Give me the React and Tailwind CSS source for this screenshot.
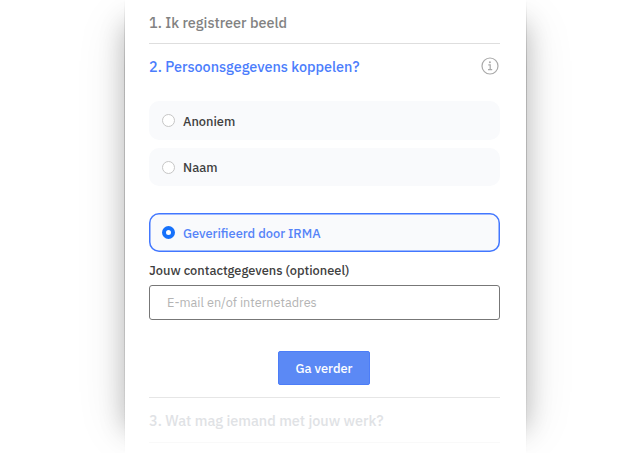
import React from "react";

function Heading({ children, className }) {
  return (
    <h2 className={`whitespace-nowrap text-[14.4px] leading-[20px] font-medium ${className}`}>
      {children}
    </h2>
  );
}

function Option({ label, checked, className }) {
  return (
    <label
      className={`flex shrink-0 items-center rounded-[10px] bg-[#f9fafc] pl-[13px] ${
        checked ? "text-[#5583f8] inset-ring-[1.5px] inset-ring-[#4277ff]" : "text-[#404040]"
      } ${className}`}
    >
      <span
        className={`mr-[8px] size-[13px] shrink-0 rounded-full bg-white ${
          checked ? "border-4 border-[#1671fb]" : "border border-[#c6c6c6]"
        }`}
      />
      <span className="mt-[2px] whitespace-nowrap text-[12.8px] leading-[18px] font-medium">{label}</span>
    </label>
  );
}

function InfoIcon() {
  return (
    <svg className="-mt-[2px]" width="18" height="18" viewBox="0 0 18 18" fill="none" stroke="#a9a9a9">
      <circle cx="9" cy="9" r="8" strokeWidth="1.2" />
      <circle cx="8.9" cy="5.2" r="1" fill="#a9a9a9" stroke="none" />
      <path d="M7.3 7.9H9.2V12.6M7 12.7H11.2" strokeWidth="1.2" />
    </svg>
  );
}

export default function App() {
  return (
    <div className="flex h-[453px] w-[638px] overflow-hidden bg-white pl-[125px] font-['IBM_Plex_Sans','Roboto',sans-serif]">
      <main className="relative h-[453px] w-[401px]">
        <div className="absolute inset-x-0 top-[24px] bottom-[24px] shadow-[0_0_24px_0_rgba(0,0,0,0.22),0_0_48px_0_rgba(0,0,0,0.12)]" />
        <div className="absolute inset-y-0 -left-px w-[403px] bg-linear-to-b from-transparent via-[#b0b0b0] via-15% to-transparent" />
        <div className="absolute inset-y-0 -left-px w-[403px] bg-linear-to-b from-transparent from-15% via-[#b0b0b0] via-50% to-transparent to-95%" />
        <div className="relative flex h-full flex-col bg-white pr-[26px] pl-[24px]">
          <div className="flex h-[44px] shrink-0 items-center border-b border-[#dedede] pt-[2px]">
            <Heading className="text-[#828282]">1. Ik registreer beeld</Heading>
          </div>
          <div className="flex h-[45px] shrink-0 items-center justify-between pt-px pr-px">
            <Heading className="text-[#4b7dfc]">2. Persoonsgegevens koppelen?</Heading>
            <InfoIcon />
          </div>
          <Option label="Anoniem" className="mt-[12px] h-[39px]" />
          <Option label="Naam" className="mt-[8px] h-[38px]" />
          <Option label="Geverifieerd door IRMA" checked className="mt-[27px] h-[39px]" />
          <div className="mt-[10px] text-[12.8px] leading-[18px] font-medium whitespace-nowrap text-[#404040]">
            Jouw contactgegevens (optioneel)
          </div>
          <input
            className="mt-[5px] h-[35px] shrink-0 rounded-[3px] border border-[#777777] px-[17px] pb-px text-[12.7px] placeholder:text-[#b4b4b4]"
            placeholder="E-mail en/of internetadres"
          />
          <button className="mt-[31px] mr-px h-[34px] w-[92px] shrink-0 self-center rounded-[2px] border border-[#4c7df8] bg-[#5b89f5] pt-px text-[12.8px] font-medium whitespace-nowrap text-white">
            Ga verder
          </button>
          <div className="mt-[12px] flex h-[46px] shrink-0 items-center border-y border-t-[#e6e6e6] border-b-[#f9f9f9] pt-px">
            <Heading className="text-[#e0e2e5]">3. Wat mag iemand met jouw werk?</Heading>
          </div>
        </div>
      </main>
    </div>
  );
}
